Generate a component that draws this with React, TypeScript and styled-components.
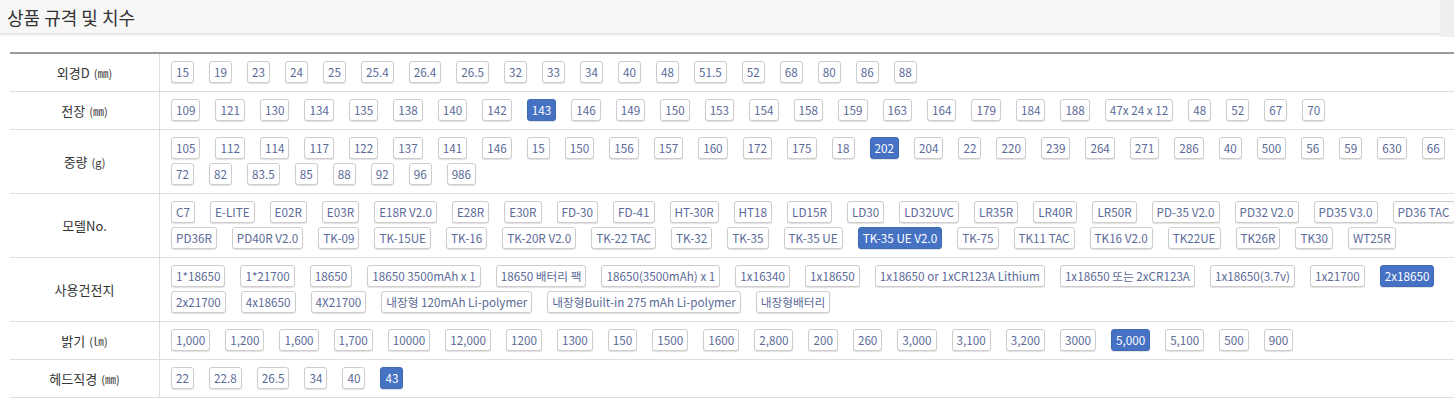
import React from 'react';
import styled, { createGlobalStyle } from 'styled-components';

const GlobalStyle = createGlobalStyle`
  * {
    box-sizing: border-box;
  }
  body {
    margin: 0;
    background: #fff;
    font-family: 'Noto Sans CJK KR', sans-serif;
    color: #333;
  }
`;

// each row's values are listed line by line, as the catalogue wraps them
type SpecRow = {
  label: string;
  unit?: string;
  lines: string[][];
  active: string;
};

const rows: SpecRow[] = [
  {
    label: '외경D',
    unit: '(㎜)',
    lines: [['15', '19', '23', '24', '25', '25.4', '26.4', '26.5', '32', '33', '34', '40', '48', '51.5', '52', '68', '80', '86', '88']],
    active: '',
  },
  {
    label: '전장',
    unit: '(㎜)',
    lines: [['109', '121', '130', '134', '135', '138', '140', '142', '143', '146', '149', '150', '153', '154', '158', '159', '163', '164', '179', '184', '188', '47x 24 x 12', '48', '52', '67', '70']],
    active: '143',
  },
  {
    label: '중량',
    unit: '(g)',
    lines: [
      ['105', '112', '114', '117', '122', '137', '141', '146', '15', '150', '156', '157', '160', '172', '175', '18', '202', '204', '22', '220', '239', '264', '271', '286', '40', '500', '56', '59', '630', '66'],
      ['72', '82', '83.5', '85', '88', '92', '96', '986'],
    ],
    active: '202',
  },
  {
    label: '모델No.',
    lines: [
      ['C7', 'E-LITE', 'E02R', 'E03R', 'E18R V2.0', 'E28R', 'E30R', 'FD-30', 'FD-41', 'HT-30R', 'HT18', 'LD15R', 'LD30', 'LD32UVC', 'LR35R', 'LR40R', 'LR50R', 'PD-35 V2.0', 'PD32 V2.0', 'PD35 V3.0', 'PD36 TAC'],
      ['PD36R', 'PD40R V2.0', 'TK-09', 'TK-15UE', 'TK-16', 'TK-20R V2.0', 'TK-22 TAC', 'TK-32', 'TK-35', 'TK-35 UE', 'TK-35 UE V2.0', 'TK-75', 'TK11 TAC', 'TK16 V2.0', 'TK22UE', 'TK26R', 'TK30', 'WT25R'],
    ],
    active: 'TK-35 UE V2.0',
  },
  {
    label: '사용건전지',
    lines: [
      ['1*18650', '1*21700', '18650', '18650 3500mAh x 1', '18650 배터리 팩', '18650(3500mAh) x 1', '1x16340', '1x18650', '1x18650 or 1xCR123A Lithium', '1x18650 또는 2xCR123A', '1x18650(3.7v)', '1x21700', '2x18650'],
      ['2x21700', '4x18650', '4X21700', '내장형 120mAh Li-polymer', '내장형Built-in 275 mAh Li-polymer', '내장형배터리'],
    ],
    active: '2x18650',
  },
  {
    label: '밝기',
    unit: '(㏐)',
    lines: [['1,000', '1,200', '1,600', '1,700', '10000', '12,000', '1200', '1300', '150', '1500', '1600', '2,800', '200', '260', '3,000', '3,100', '3,200', '3000', '5,000', '5,100', '500', '900']],
    active: '5,000',
  },
  {
    label: '헤드직경',
    unit: '(㎜)',
    lines: [['22', '22.8', '26.5', '34', '40', '43']],
    active: '43',
  },
];

const TitleBar = styled.div`
  display: flex;
  height: 37px;
`;

const Title = styled.h2`
  flex: 1;
  margin: 0;
  height: 34px;
  padding-left: 7px;
  display: flex;
  align-items: center;
  background: #f7f7f7;
  border-bottom: 1px solid #e2e2e2;
  box-shadow: 0 2px 0 #f1f1f1;
  font-size: 18px;
  font-weight: 400;
  color: #333;
`;

const Gutter = styled.div`
  width: 14px;
  background: #efefef;
`;

const SpecTable = styled.div`
  margin: 15px 0 0 10px;
  border-top: 2px solid #9a9a9a;
`;

const Row = styled.div`
  display: grid;
  grid-template-columns: 150px 1fr;
  border-bottom: 1px solid #dedede;
`;

const Label = styled.div`
  display: flex;
  align-items: center;
  justify-content: center;
  border-right: 1px solid #dedede;
  font-size: 13px;
  color: #333;
`;

const Unit = styled.span`
  font-size: 11px;
  margin-left: 4px;
`;

const Values = styled.div`
  display: flex;
  flex-direction: column;
  gap: 4px;
  padding: 7px 4px 8px 11px;
`;

const Line = styled.div`
  display: flex;
  gap: 15px;
`;

const Chip = styled.button<{ $active: boolean }>`
  height: 22px;
  padding: 0 4px;
  border: 1px solid ${(p) => (p.$active ? '#3f69b9' : '#cdcdcd')};
  border-radius: 3px;
  background: ${(p) => (p.$active ? '#4672c4' : '#fff')};
  color: ${(p) => (p.$active ? '#fff' : '#5b6a98')};
  box-shadow: 0 1px 1px rgba(0, 0, 0, 0.12);
  font-family: 'Noto Sans CJK KR', sans-serif;
  font-size: 11.7px;
  line-height: 20px;
  white-space: nowrap;
  cursor: pointer;
`;

export default function App() {
  return (
    <>
      <GlobalStyle />
      <TitleBar>
        <Title>상품 규격 및 치수</Title>
        <Gutter />
      </TitleBar>
      <SpecTable>
        {rows.map((row) => (
          <Row key={row.label}>
            <Label>
              {row.label}
              {row.unit && <Unit>{row.unit}</Unit>}
            </Label>
            <Values>
              {row.lines.map((line, i) => (
                <Line key={i}>
                  {line.map((v) => (
                    <Chip key={v} $active={v === row.active}>
                      {v}
                    </Chip>
                  ))}
                </Line>
              ))}
            </Values>
          </Row>
        ))}
      </SpecTable>
    </>
  );
}
